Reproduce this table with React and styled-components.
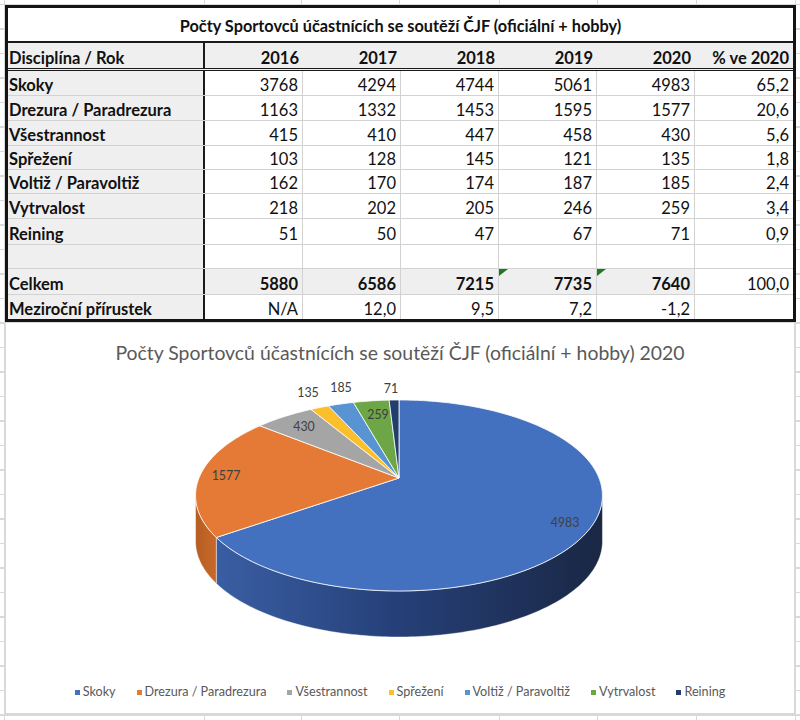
import React from 'react';
import styled, { createGlobalStyle } from 'styled-components';

const GlobalStyle = createGlobalStyle`
  html, body {
    margin: 0;
    padding: 0;
    background: #fff;
  }
  body {
    font-family: Lato, "Liberation Sans", sans-serif;
  }
`;

const grid = '#d9d9d9';

const Sheet = styled.div`
  width: 800px;
  height: 720px;
  box-sizing: border-box;
  padding: 5px 0 0 5px;
  background-color: #fff;
  background-image:
    linear-gradient(to right,
      transparent 4px, ${grid} 4px 5px,
      transparent 5px 204px, ${grid} 204px 205px,
      transparent 205px 301px, ${grid} 301px 302px,
      transparent 302px 399px, ${grid} 399px 400px,
      transparent 400px 499px, ${grid} 499px 500px,
      transparent 500px 597px, ${grid} 597px 598px,
      transparent 598px 696px, ${grid} 696px 697px,
      transparent 697px 795px, ${grid} 795px 796px,
      transparent 796px),
    repeating-linear-gradient(to bottom, ${grid} 0 1px, transparent 1px 24.5px);
  background-position: 0 0, 0 4px;
`;

const Table = styled.div`
  width: 791px;
  box-sizing: border-box;
  border: 3px solid #141414;
  background: #fff;
  color: #111;
`;

const TitleRow = styled.div`
  height: 35px;
  border-bottom: 2px solid #1a1a1a;
  display: flex;
  align-items: center;
  justify-content: center;
  font-weight: 700;
  font-size: 16.3px;
  padding-top: 2px;
  box-sizing: border-box;
`;

const COLS = '197px repeat(6, 1fr)';

const HeadRow = styled.div`
  display: grid;
  grid-template-columns: ${COLS};
  height: 28px;
  box-sizing: border-box;
  background: #efefef;
  border-bottom: 3px double #1a1a1a;
  font-weight: 700;
  font-size: 16.5px;
`;

const Row = styled.div`
  display: grid;
  grid-template-columns: ${COLS};
  height: ${(p) => p.$h}px;
  box-sizing: border-box;
  border-bottom: ${(p) => (p.$last ? 'none' : '1px solid #d2d2d2')};
  font-size: 16.5px;
`;

const LabelCell = styled.div`
  display: flex;
  align-items: flex-end;
  padding: 0 0 0.5px 1px;
  background: #efefef;
  border-right: 2px solid #1a1a1a;
  font-weight: 700;
  white-space: nowrap;
`;

const NumCell = styled.div`
  position: relative;
  display: flex;
  align-items: flex-end;
  justify-content: flex-end;
  padding: 0 4px 0.5px 0;
  background: ${(p) => (p.$shade ? '#efefef' : '#fff')};
  border-right: ${(p) => (p.$end ? 'none' : '1px solid #d2d2d2')};
  font-weight: ${(p) => (p.$bold ? 700 : 400)};

  &::before {
    content: '';
    display: ${(p) => (p.$flag ? 'block' : 'none')};
    position: absolute;
    top: 0;
    left: 0;
    width: 9px;
    height: 7px;
    background: #1d7a24;
    clip-path: polygon(0 0, 100% 0, 0 100%);
  }
`;

const HeadNum = styled(NumCell)`
  background: #efefef;
  border-right: none;
  font-weight: 700;
`;

const ChartPanel = styled.div`
  width: 790px;
  height: 392px;
  box-sizing: border-box;
  border: 1px solid #d9d9d9;
  background: #fff;
  display: flex;
  flex-direction: column;
  align-items: center;
  padding-top: 18px;
`;

const ChartTitle = styled.div`
  font-size: 19.4px;
  line-height: 24px;
  color: #595959;
  white-space: nowrap;
`;

const PieSvg = styled.svg`
  display: block;
  flex: none;
  width: 788px;
  height: 300px;
`;

const Legend = styled.div`
  display: flex;
  gap: 21px;
  margin-top: 20px;
  font-size: 12.6px;
  line-height: 14px;
  color: #595959;
  white-space: nowrap;
`;

const LegendItem = styled.div`
  display: flex;
  align-items: center;
  gap: 3px;
`;

const Marker = styled.span`
  width: 5px;
  height: 5px;
  background: ${(p) => p.$color};
`;

const years = ['2016', '2017', '2018', '2019', '2020'];

const rows = [
  { name: 'Skoky', values: ['3768', '4294', '4744', '5061', '4983'], pct: '65,2', h: 25 },
  { name: 'Drezura / Paradrezura', values: ['1163', '1332', '1453', '1595', '1577'], pct: '20,6', h: 25 },
  { name: 'Všestrannost', values: ['415', '410', '447', '458', '430'], pct: '5,6', h: 25 },
  { name: 'Spřežení', values: ['103', '128', '145', '121', '135'], pct: '1,8', h: 24 },
  { name: 'Voltiž / Paravoltiž', values: ['162', '170', '174', '187', '185'], pct: '2,4', h: 24 },
  { name: 'Vytrvalost', values: ['218', '202', '205', '246', '259'], pct: '3,4', h: 25 },
  { name: 'Reining', values: ['51', '50', '47', '67', '71'], pct: '0,9', h: 26 },
  { name: '', values: ['', '', '', '', ''], pct: '', h: 24 },
  { name: 'Celkem', values: ['5880', '6586', '7215', '7735', '7640'], pct: '100,0', h: 26, total: true, flags: [3, 4] },
  { name: 'Meziroční přírustek', values: ['N/A', '12,0', '9,5', '7,2', '-1,2'], pct: '', h: 24, last: true },
];

const slices = [
  { name: 'Skoky', value: 4983, color: '#4370bf', side: 'url(#sideBlue)', label: [565, 524] },
  { name: 'Drezura / Paradrezura', value: 1577, color: '#e47a35', side: 'url(#sideOrange)', label: [226, 477] },
  { name: 'Všestrannost', value: 430, color: '#a5a5a5', side: '#7c7c7c', label: [304, 428] },
  { name: 'Spřežení', value: 135, color: '#fcbf2c', side: '#c39100', label: [308, 394] },
  { name: 'Voltiž / Paravoltiž', value: 185, color: '#5893d2', side: '#3b6ba1', label: [341, 389] },
  { name: 'Vytrvalost', value: 259, color: '#6ca646', side: '#4d7d31', label: [378, 416] },
  { name: 'Reining', value: 71, color: '#213e6d', side: '#152a4a', label: [391, 390] },
];

// projected rim of the pie, angle t in degrees clockwise from 12 o'clock
const CX = 399;
const CY = 480;
const RX = 200;
const RY = 92.3;
const PERSP = 0.183;
const DEPTH = 46;
const SIDE_FROM = 100.5;
const SIDE_TO = 259.5;

const rim = (t, dy = 0) => {
  const r = (t * Math.PI) / 180;
  const den = 1 + PERSP * Math.cos(r);
  return [CX + (RX * Math.sin(r)) / den, CY - (RY * Math.cos(r)) / den + dy];
};

const arc = (a, b, dy = 0) => {
  const pts = [];
  const steps = Math.max(2, Math.ceil(Math.abs(b - a)));
  for (let i = 0; i <= steps; i++) {
    const [x, y] = rim(a + ((b - a) * i) / steps, dy);
    pts.push(`${x.toFixed(2)},${y.toFixed(2)}`);
  }
  return pts;
};

const topPath = (a, b) => `M${CX},${CY} L${arc(a, b).join(' L')} Z`;

const sidePath = (a, b) => {
  const top = arc(a, b);
  const bottom = arc(b, a, DEPTH);
  return `M${top.join(' L')} L${bottom.join(' L')} Z`;
};

const total = slices.reduce((s, d) => s + d.value, 0);
let acc = 0;
const pieces = slices.map((d) => {
  const a = (acc / total) * 360;
  acc += d.value;
  const b = (acc / total) * 360;
  return { ...d, a, b };
});

const Pie = () => (
  <PieSvg viewBox="0 0 788 300">
    <defs>
      <linearGradient id="sideBlue" x1="0" y1="0" x2="1" y2="0">
        <stop offset="0" stopColor="#3a5ea3" />
        <stop offset="0.45" stopColor="#26417a" />
        <stop offset="1" stopColor="#1a2744" />
      </linearGradient>
      <linearGradient id="sideOrange" x1="0" y1="0" x2="1" y2="0">
        <stop offset="0" stopColor="#b65d22" />
        <stop offset="1" stopColor="#c8692b" />
      </linearGradient>
    </defs>
    <g transform="translate(-6,-367)">
      {pieces.map((p) => {
        const a = Math.max(p.a, SIDE_FROM);
        const b = Math.min(p.b, SIDE_TO);
        if (b <= a) return null;
        return (
          <path key={`s-${p.name}`} d={sidePath(a, b)} fill={p.side} stroke="#ffffff" strokeWidth="0.6" strokeOpacity="0.7" />
        );
      })}
      {pieces.map((p) => (
        <path key={`t-${p.name}`} d={topPath(p.a, p.b)} fill={p.color} stroke="#ffffff" strokeWidth="0.8" strokeLinejoin="round" />
      ))}
      {pieces.map((p) => (
        <text
          key={`l-${p.name}`}
          x={p.label[0]}
          y={p.label[1]}
          textAnchor="middle"
          dominantBaseline="central"
          fontFamily="Lato, 'Liberation Sans', sans-serif"
          fontSize="12.4"
          fill="#404040"
        >
          {p.value}
        </text>
      ))}
    </g>
  </PieSvg>
);

const App = () => {
  return (
    <>
      <GlobalStyle />
      <Sheet>
        <Table>
          <TitleRow>Počty Sportovců účastnících se soutěží ČJF (oficiální + hobby)</TitleRow>
          <HeadRow>
            <LabelCell>Disciplína / Rok</LabelCell>
            {years.map((y) => (
              <HeadNum key={y}>{y}</HeadNum>
            ))}
            <HeadNum>% ve 2020</HeadNum>
          </HeadRow>
          {rows.map((r, i) => (
            <Row key={i} $h={r.h} $last={r.last}>
              <LabelCell>{r.name}</LabelCell>
              {r.values.map((v, j) => (
                <NumCell key={j} $bold={r.total} $shade={r.total} $flag={r.flags && r.flags.includes(j)}>
                  {v}
                </NumCell>
              ))}
              <NumCell $end>{r.pct}</NumCell>
            </Row>
          ))}
        </Table>
        <ChartPanel>
          <ChartTitle>Počty Sportovců účastnících se soutěží ČJF (oficiální + hobby) 2020</ChartTitle>
          <Pie />
          <Legend>
            {slices.map((s) => (
              <LegendItem key={s.name}>
                <Marker $color={s.color} />
                {s.name}
              </LegendItem>
            ))}
          </Legend>
        </ChartPanel>
      </Sheet>
    </>
  );
};

export default App;
